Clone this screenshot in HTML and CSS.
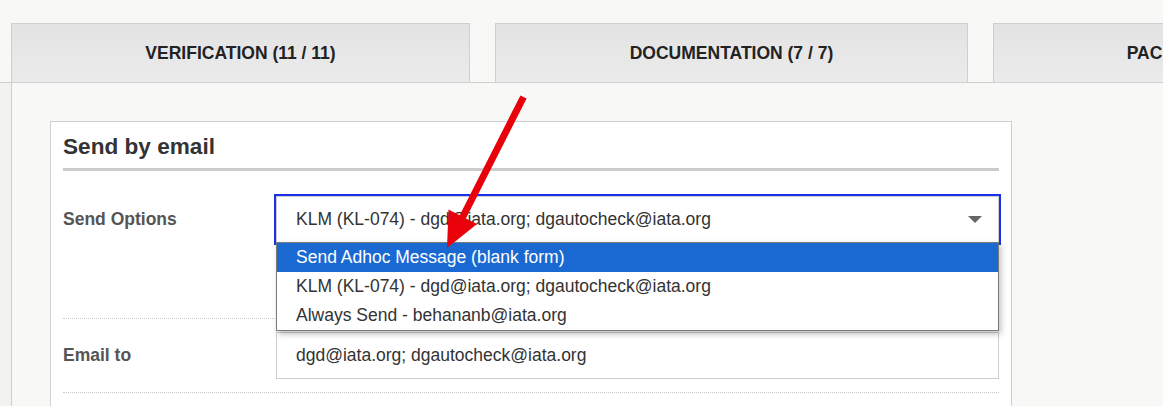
FILE: index.html
```html
<!DOCTYPE html>
<html>
<head>
<meta charset="utf-8">
<link rel="stylesheet" href="styles.css">
</head>
<body>
<div class="page">
  <div class="tabs">
    <div class="tab tab-1">VERIFICATION (11 / 11)</div>
    <div class="tab tab-2">DOCUMENTATION (7 / 7)</div>
    <div class="tab tab-3">PACKAGING (10 / 10)</div>
  </div>
  <div class="content">
    <div class="panel">
      <h2 class="panel-title">Send by email</h2>
      <div class="row row-options">
        <div class="label">Send Options</div>
        <div class="field">
          <div class="select">
            <span>KLM (KL-074) - dgd@iata.org; dgautocheck@iata.org</span>
            <span class="caret"></span>
          </div>
          <ul class="dropdown">
            <li class="selected">Send Adhoc Message (blank form)</li>
            <li>KLM (KL-074) - dgd@iata.org; dgautocheck@iata.org</li>
            <li>Always Send - behananb@iata.org</li>
          </ul>
        </div>
      </div>
      <div class="row row-email">
        <div class="label">Email to</div>
        <div class="field">
          <div class="input">dgd@iata.org; dgautocheck@iata.org</div>
        </div>
      </div>
      <div class="row row-last"></div>
    </div>
  </div>
  <svg class="annotation" width="1163" height="406" viewBox="0 0 1163 406">
    <path d="M520.4,95.4 L526.6,98.6 L465.9,218.4 L477.1,224 L447,248 L448.5,209.6 L459.7,215.2 Z" fill="#e8000b"/>
  </svg>
</div>
</body>
</html>
```
FILE: styles.css
```css
html, body {
  margin: 0;
  padding: 0;
  background: #f8f8f6;
  font-family: "Liberation Sans", Arial, sans-serif;
  overflow: hidden;
}
.page {
  position: relative;
  width: 1163px;
  height: 406px;
  overflow: hidden;
}
.tabs {
  display: flex;
  gap: 25px;
  padding: 23px 0 0 11px;
  border-bottom: 1px solid #cfcfcf;
  white-space: nowrap;
}
.tab {
  flex: none;
  height: 59px;
  box-sizing: border-box;
  border: 1px solid #cfcfcf;
  border-bottom: none;
  background: linear-gradient(#e3e3e3, #ebebeb);
  display: flex;
  align-items: center;
  justify-content: center;
  font-weight: bold;
  font-size: 17.5px;
  color: #222;
}
.tab-1 { width: 459px; }
.tab-2 { width: 473px; }
.tab-3 { width: 443px; }
.content {
  margin-left: 11px;
  border-left: 1px solid #cfcfcf;
  background: #f8f8f6;
  padding: 38px 0 0 38px;
  height: 400px;
  box-shadow: -11px 0 0 #f2f2f0;
}
.panel {
  width: 962px;
  box-sizing: border-box;
  background: #fff;
  border: 1px solid #cfcfcf;
  padding: 0 12px;
}
.panel-title {
  margin: 0;
  padding: 12px 0 9px;
  font-size: 22.6px;
  font-weight: bold;
  color: #333;
  line-height: 25px;
  border-bottom: 3px solid #cccccc;
}
.row {
  display: flex;
  align-items: flex-start;
  border-bottom: 1px dotted #c8c8c8;
}
.label {
  width: 213px;
  flex: none;
  font-weight: bold;
  font-size: 17.5px;
  color: #555;
}
.field {
  position: relative;
  flex: 1;
}
.row-options {
  padding: 25px 0 75px;
}
.row-options .label {
  line-height: 47px;
}
.row-email {
  padding: 13px 0 13px;
}
.row-email .label {
  line-height: 47px;
}
.row-last {
  height: 20px;
  border-bottom: none;
}
.select {
  height: 47px;
  box-sizing: border-box;
  border: 1px solid #cfcfcf;
  outline: 2px solid #1c2fe8;
  display: flex;
  align-items: center;
  justify-content: space-between;
  padding: 0 16px 0 19px;
  font-size: 17.5px;
  color: #333;
}
.caret {
  width: 0;
  height: 0;
  border-left: 7px solid transparent;
  border-right: 7px solid transparent;
  border-top: 7px solid #666;
}
.dropdown {
  position: absolute;
  left: 0;
  right: 0;
  top: 46px;
  margin: 0;
  padding: 0;
  list-style: none;
  background: #fff;
  border: 1px solid #7a7a7a;
  box-shadow: 2px 3px 6px rgba(0,0,0,0.25);
  font-size: 17.5px;
  color: #333;
  z-index: 2;
}
.dropdown li {
  height: 29px;
  line-height: 29px;
  padding-left: 19px;
}
.dropdown li.selected {
  background: #1a69d3;
  color: #fff;
}
.input {
  height: 47px;
  box-sizing: border-box;
  border: 1px solid #cfcfcf;
  display: flex;
  align-items: center;
  padding-left: 19px;
  font-size: 17.5px;
  color: #333;
}
.annotation {
  position: absolute;
  top: 0;
  left: 0;
  pointer-events: none;
  z-index: 5;
}
```
